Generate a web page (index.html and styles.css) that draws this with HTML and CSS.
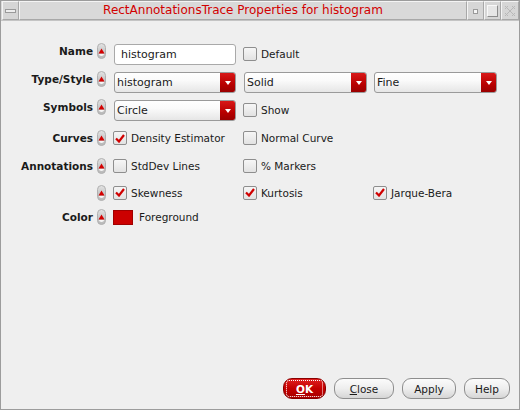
FILE: index.html
```html
<!DOCTYPE html>
<html>
<head>
<meta charset="utf-8">
<link rel="stylesheet" href="styles.css">
</head>
<body>
<div class="window">
  <div class="titlebar">
    <div class="tb-btn tb-menu"><span class="menu-bar"></span></div>
    <div class="tb-title">RectAnnotationsTrace Properties for histogram</div>
    <div class="tb-btn tb-min"><span class="min-dot"></span></div>
    <div class="tb-btn tb-max"><span class="max-box"></span></div>
    <div class="tb-btn tb-close">
      <svg width="12" height="12" viewBox="0 0 12 12"><path d="M1 1 L11 11 M11 1 L1 11 M1 4 L4 1 M8 1 L11 4 M1 8 L4 11 M8 11 L11 8" stroke="#b8b8b8" stroke-width="1" fill="none"/></svg>
    </div>
  </div>
  <div class="body">
    <div class="form">
      <!-- Row 1 -->
      <div class="lbl up">Name</div>
      <div class="spin up"><svg width="9" height="16" viewBox="0 0 9 16"><use href="#spin"/></svg></div>
      <div class="cell"><div class="textinput">histogram</div></div>
      <div class="cell"><label class="cb"><span class="box"></span>Default</label></div>
      <div class="cell"></div>

      <!-- Row 2 -->
      <div class="lbl up">Type/Style</div>
      <div class="spin up"><svg width="9" height="16" viewBox="0 0 9 16"><use href="#spin"/></svg></div>
      <div class="cell"><div class="combo w122"><span class="ctext">histogram</span><span class="drop"></span></div></div>
      <div class="cell"><div class="combo w123"><span class="ctext">Solid</span><span class="drop"></span></div></div>
      <div class="cell"><div class="combo w123"><span class="ctext">Fine</span><span class="drop"></span></div></div>

      <!-- Row 3 -->
      <div class="lbl up">Symbols</div>
      <div class="spin up"><svg width="9" height="16" viewBox="0 0 9 16"><use href="#spin"/></svg></div>
      <div class="cell"><div class="combo w122"><span class="ctext">Circle</span><span class="drop"></span></div></div>
      <div class="cell"><label class="cb"><span class="box"></span>Show</label></div>
      <div class="cell"></div>

      <!-- Row 4 -->
      <div class="lbl">Curves</div>
      <div class="spin"><svg width="9" height="16" viewBox="0 0 9 16"><use href="#spin"/></svg></div>
      <div class="cell"><label class="cb"><span class="box checked"><svg width="10" height="9" viewBox="0 0 10 9"><use href="#tick"/></svg></span>Density Estimator</label></div>
      <div class="cell"><label class="cb"><span class="box"></span>Normal Curve</label></div>
      <div class="cell"></div>

      <!-- Row 5 -->
      <div class="lbl">Annotations</div>
      <div class="spin"><svg width="9" height="16" viewBox="0 0 9 16"><use href="#spin"/></svg></div>
      <div class="cell"><label class="cb"><span class="box"></span>StdDev Lines</label></div>
      <div class="cell"><label class="cb"><span class="box"></span>% Markers</label></div>
      <div class="cell"></div>

      <!-- Row 6 -->
      <div class="lbl"></div>
      <div class="spin"><svg width="9" height="16" viewBox="0 0 9 16"><use href="#spin"/></svg></div>
      <div class="cell"><label class="cb"><span class="box checked"><svg width="10" height="9" viewBox="0 0 10 9"><use href="#tick"/></svg></span>Skewness</label></div>
      <div class="cell"><label class="cb"><span class="box checked"><svg width="10" height="9" viewBox="0 0 10 9"><use href="#tick"/></svg></span>Kurtosis</label></div>
      <div class="cell"><label class="cb"><span class="box checked"><svg width="10" height="9" viewBox="0 0 10 9"><use href="#tick"/></svg></span>Jarque-Bera</label></div>

      <!-- Row 7 -->
      <div class="lbl">Color</div>
      <div class="spin"><svg width="9" height="16" viewBox="0 0 9 16"><use href="#spin"/></svg></div>
      <div class="cell"><div class="colorpick"><span class="swatch"></span>Foreground</div></div>
      <div class="cell"></div>
      <div class="cell"></div>
    </div>

    <div class="buttons">
      <button class="btn ok"><span class="focus"><u>O</u>K</span></button>
      <button class="btn close"><u>C</u>lose</button>
      <button class="btn apply">Apply</button>
      <button class="btn help">Help</button>
    </div>
  </div>
</div>

<svg width="0" height="0" class="defs">
  <defs>
    <linearGradient id="spg" x1="0" y1="0" x2="0" y2="1">
      <stop offset="0" stop-color="#e4e4e4"/>
      <stop offset="0.5" stop-color="#c8c8c8"/>
      <stop offset="1" stop-color="#b8b8b8"/>
    </linearGradient>
    <g id="spin">
      <rect x="0.5" y="0.5" width="8" height="15" rx="4" ry="4" fill="url(#spg)" stroke="#b0b0b0"/>
      <path d="M1.5 10.5 L4.5 5.5 L7.5 10.5 Z" fill="#d40000"/>
      <path d="M1.8 11 A2.8 2.8 0 0 0 7.2 11 Z" fill="#f6f6f6"/>
    </g>
    <g id="tick">
      <path d="M1 4.5 L4 7.5 L9 1" stroke="#d00000" stroke-width="2.2" fill="none" stroke-linejoin="miter"/>
    </g>
  </defs>
</svg>
</body>
</html>
```
FILE: styles.css
```css
html {
  background: #ffffff;
}
body {
  margin: 0;
  font-family: "DejaVu Sans", sans-serif;
  font-size: 10.5px;
  color: #1a1a1a;
}
.defs {
  position: absolute;
}
.window {
  width: 518px;
  height: 408px;
  border: 1px solid #9c9c9c;
  background: #efefef;
  display: flex;
  flex-direction: column;
}
.titlebar {
  height: 19px;
  display: flex;
  background: #d9d9d9;
  border-bottom: 1px solid #c4c4c4;
}
.tb-btn {
  height: 17px;
  border: 1px solid;
  border-color: #f4f4f4 #a8a8a8 #a8a8a8 #f4f4f4;
  background: #d6d6d6;
  display: flex;
  align-items: center;
  justify-content: center;
}
.tb-menu {
  width: 15px;
  margin-left: 1px;
}
.menu-bar {
  width: 9px;
  height: 2px;
  background: #eeeeee;
  border: 1px solid #9a9a9a;
}
.tb-title {
  flex: 1;
  height: 17px;
  border: 1px solid;
  border-color: #f4f4f4 #a8a8a8 #a8a8a8 #f4f4f4;
  background: #d9d9d9;
  color: #d20000;
  font-size: 12px;
  text-align: center;
  line-height: 17px;
}
.tb-min, .tb-max {
  width: 15px;
}
.min-dot {
  width: 3px;
  height: 3px;
  background: #f6f6f6;
  border: 1px solid #9a9a9a;
  margin-top: 2px;
}
.max-box {
  width: 9px;
  height: 10px;
  background: #e6e6e6;
  border: 1px solid;
  border-color: #f8f8f8 #8c8c8c #8c8c8c #f8f8f8;
}
.tb-close {
  width: 16px;
}
.body {
  flex: 1;
  display: flex;
  flex-direction: column;
}
.form {
  display: grid;
  grid-template-columns: 96px 17px 130px 130px 130px;
  grid-template-rows: 28px 28px 28px 28px 27px 27px 22px;
  align-items: center;
  padding-top: 19px;
}
.lbl {
  font-weight: bold;
  text-align: right;
  padding-right: 4px;
  font-size: 10.5px;
}
.lbl.up {
  margin-bottom: 6px;
}
.spin {
  height: 16px;
  display: flex;
}
.spin.up {
  margin-bottom: 6px;
}
.cell {
  display: flex;
  align-items: center;
}
.textinput {
  width: 114px;
  height: 19px;
  border: 1px solid #a9a9a9;
  border-radius: 3px;
  background: #ffffff;
  padding-left: 6px;
  line-height: 19px;
  font-size: 11px;
  margin-top: 1px;
}
.combo {
  height: 19px;
  border: 1px solid #9a9a9a;
  border-radius: 3px;
  background: linear-gradient(#ffffff, #fafafa 40%, #e6e6e6);
  display: flex;
  overflow: hidden;
}
.w122 { width: 120px; }
.w123 { width: 121px; }
.ctext {
  flex: 1;
  padding-left: 2px;
  line-height: 19px;
  font-size: 11px;
}
.drop {
  width: 15px;
  background: linear-gradient(#d81818, #b80000 60%, #9a0000);
  position: relative;
}
.drop::after {
  content: "";
  position: absolute;
  left: 5px;
  top: 8px;
  border-left: 3px solid transparent;
  border-right: 3px solid transparent;
  border-top: 4px solid #ffffff;
}
.cb {
  display: flex;
  align-items: center;
  font-size: 10.5px;
  margin-left: -1px;
}
.box {
  width: 12px;
  height: 12px;
  border: 1px solid #8e8e8e;
  border-radius: 2px;
  background: linear-gradient(#f6f6f6, #e2e2e2);
  margin-right: 4px;
  display: flex;
  align-items: center;
  justify-content: center;
}
.box svg {
  display: block;
}
.colorpick {
  display: flex;
  align-items: center;
  font-size: 10.5px;
  margin-left: -1px;
}
.swatch {
  width: 18px;
  height: 13px;
  background: #cc0000;
  border: 1px solid #a00000;
  margin-right: 6px;
}
.buttons {
  margin-top: auto;
  display: flex;
  justify-content: flex-end;
  gap: 8px;
  padding-right: 9px;
  padding-bottom: 10px;
}
.btn {
  height: 21px;
  border: 1px solid #8e8e8e;
  border-radius: 9px;
  background: linear-gradient(#fbfbfb, #eeeeee 50%, #d6d6d6);
  font-family: "DejaVu Sans", sans-serif;
  font-size: 10.5px;
  color: #1a1a1a;
  padding: 0;
  display: flex;
  align-items: center;
  justify-content: center;
}
.btn u {
  text-decoration-thickness: 1px;
}
.ok {
  width: 43px;
  background: linear-gradient(#e02020, #c40000 50%, #a80000);
  border-color: #8a0000;
  color: #ffffff;
  font-weight: bold;
  padding: 2px;
}
.focus {
  flex: 1;
  height: 15px;
  border: 1px dotted #ffffff;
  border-radius: 3px;
  display: flex;
  align-items: center;
  justify-content: center;
}
.close { width: 60px; }
.apply { width: 54px; }
.help { width: 46px; }
```
